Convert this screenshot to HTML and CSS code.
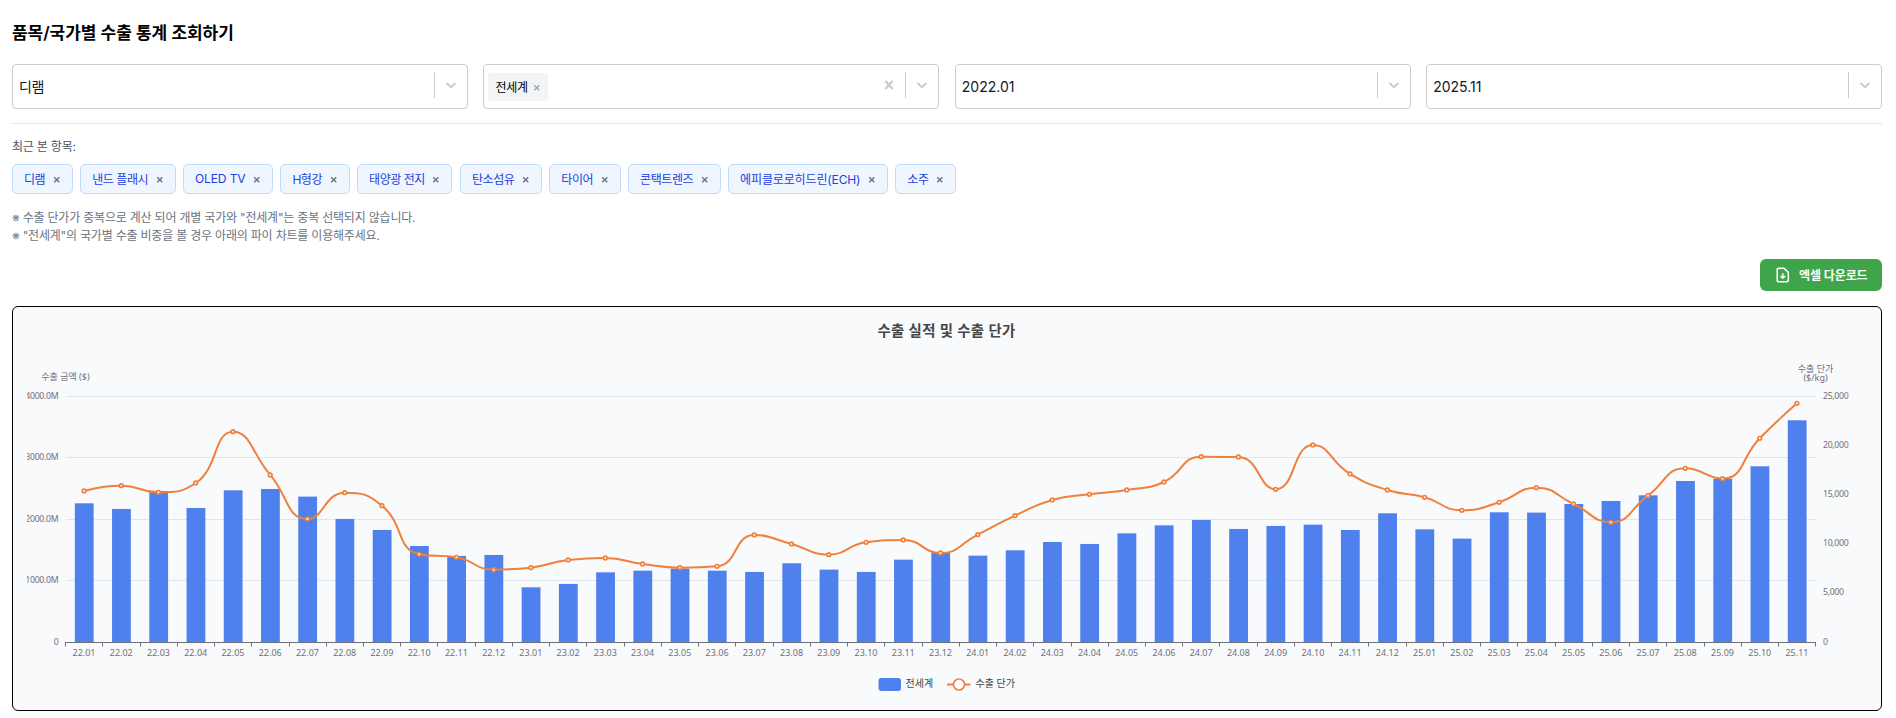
FILE: index.html
```html
<!DOCTYPE html>
<html lang="ko">

<head>
  <meta charset="UTF-8" />
  <meta name="viewport" content="width=device-width, initial-scale=1.0" />
  <title>품목/국가별 수출 통계</title>
  <link rel="stylesheet" href="styles.css">
</head>

<body>
  <h1 class="page-title">품목/국가별 수출 통계 조회하기</h1>

  <div class="filters">
    <div class="select">
      <span class="select-value kr">디램</span>
      <span class="select-separator"></span>
      <svg class="select-icon" viewBox="0 0 20 20"><use href="#chevron" /></svg>
    </div>
    <div class="select">
      <span class="select-chip">전세계<svg class="x-icon chip-x" viewBox="0 0 8 8"><use href="#cross" /></svg></span>
      <svg class="select-icon clear" viewBox="0 0 20 20"><path d="M6.4 6L13.6 14M13.6 6L6.4 14" /></svg>
      <span class="select-separator"></span>
      <svg class="select-icon" viewBox="0 0 20 20"><use href="#chevron" /></svg>
    </div>
    <div class="select">
      <span class="select-value">2022.01</span>
      <span class="select-separator"></span>
      <svg class="select-icon" viewBox="0 0 20 20"><use href="#chevron" /></svg>
    </div>
    <div class="select">
      <span class="select-value">2025.11</span>
      <span class="select-separator"></span>
      <svg class="select-icon" viewBox="0 0 20 20"><use href="#chevron" /></svg>
    </div>
  </div>

  <div class="recent">
    <p class="recent-label">최근 본 항목:</p>
    <div class="tags" id="tags"></div>
  </div>

  <div class="notes">
    <p>※ 수출 단가가 중복으로 계산 되어 개별 국가와 "전세계"는 중복 선택되지 않습니다.</p>
    <p>※ "전세계"의 국가별 수출 비중을 볼 경우 아래의 파이 차트를 이용해주세요.</p>
  </div>

  <div class="actions">
    <button class="download-btn">
      <svg class="download-icon" viewBox="0 0 16 16">
        <path d="M3.7 1.2H9l4.3 4.2v7.9a1.5 1.5 0 0 1-1.5 1.5H3.7a1.5 1.5 0 0 1-1.5-1.5V2.7a1.5 1.5 0 0 1 1.5-1.5zM7.8 6.2v5M5.4 9l2.4 2.3L10.2 9" />
      </svg>
      <span>엑셀 다운로드</span>
    </button>
  </div>

  <div class="chart-card">
    <svg class="chart" id="chart" viewBox="27 307 1840 403"></svg>
  </div>

  <svg class="defs">
    <symbol id="chevron" viewBox="0 0 20 20"><path d="M5.6 8L10 12.2 14.4 8" /></symbol>
    <symbol id="cross" viewBox="0 0 8 8"><path d="M1.3 1.3L6.7 6.7M6.7 1.3L1.3 6.7" /></symbol>
  </svg>

  <script src="script.js"></script>
</body>

</html>
```
FILE: styles.css
```css
:root {
  --text-color: #111827;
  --muted: #6b7280;
  --select-border: #cccccc;
  --tag-bg: #eff6ff;
  --tag-border: #bfdbfe;
  --tag-text: #1d40e0;
  --green: #40a44a;
  --bar: #4f81ee;
  --line: #f0803c;
}

* {
  box-sizing: border-box;
}

body {
  margin: 0;
  padding: 19px 14px 0 12px;
  background: #fff;
  color: var(--text-color);
  font-family: Inter, "Noto Sans CJK KR", sans-serif;
  font-size: 14px;
}

p {
  margin: 0;
}

.page-title {
  margin: 0;
  height: 28px;
  line-height: 28px;
  font-size: 17px;
  font-weight: 600;
  letter-spacing: -0.05px;
  color: #000;
}

.filters {
  display: grid;
  grid-template-columns: repeat(4, 1fr);
  gap: 15.6px;
  margin-top: 17px;
}

.select {
  display: flex;
  align-items: center;
  height: 45px;
  padding: 0 6px;
  border: 1px solid var(--select-border);
  border-radius: 4px;
}

.select-value {
  flex: 1;
  font-size: 14px;
  line-height: 20px;
}

.select-value.kr {
  letter-spacing: -0.3px;
}

.select-chip {
  display: flex;
  align-items: center;
  height: 28px;
  margin-left: -2px;
  margin-right: auto;
  padding: 0 7.5px 0 7px;
  border-radius: 3px;
  background: #f3f4f6;
  font-size: 12px;
  letter-spacing: -0.2px;
  color: #000;
}

.select-separator {
  width: 1px;
  height: 26px;
  margin: 0 6px 4px 6px;
  background: var(--select-border);
}

.select-icon {
  width: 20px;
  height: 20px;
  margin-bottom: 3px;
  fill: none;
  stroke: #ccc;
  stroke-width: 2;
}

.clear {
  stroke-width: 2.4;
}

.x-icon {
  width: 7.5px;
  height: 7.5px;
  fill: none;
  stroke: #6b7280;
  stroke-width: 1.5;
}

.chip-x {
  margin: 2px 0 0 5px;
  stroke: #9ca3af;
}

.recent {
  margin-top: 14px;
  padding-top: 14px;
  border-top: 1px solid #e5e7eb;
}

.recent-label {
  height: 18px;
  line-height: 18px;
  font-size: 12px;
  letter-spacing: -0.2px;
  color: #4b5563;
}

.tags {
  display: flex;
  gap: 7.5px;
  margin-top: 8px;
}

.tag {
  display: flex;
  align-items: center;
  justify-content: space-between;
  height: 30px;
  padding: 0 10.5px 2px 11px;
  border: 1px solid var(--tag-border);
  border-radius: 5px;
  background: var(--tag-bg);
  color: var(--tag-text);
  font-size: 12px;
  letter-spacing: -0.45px;
  white-space: nowrap;
}

.tag.latin {
  letter-spacing: -0.13px;
}

.tag .x-icon {
  margin: 3px 1px 0 7.5px;
}

.notes {
  margin-top: 15px;
  font-size: 12px;
  line-height: 18px;
  letter-spacing: -0.2px;
  color: var(--muted);
}

.actions {
  display: flex;
  justify-content: flex-end;
  margin-top: 14px;
}

.download-btn {
  display: flex;
  align-items: center;
  gap: 8px;
  width: 122px;
  height: 32px;
  padding: 0 13px 1px 15px;
  border: none;
  border-radius: 6px;
  background: var(--green);
  color: #fff;
  font-family: inherit;
  font-size: 12px;
  font-weight: 600;
  letter-spacing: -0.1px;
  white-space: nowrap;
}

.download-icon {
  flex: none;
  width: 16px;
  height: 16px;
  fill: none;
  stroke: #fff;
  stroke-width: 1.5;
  stroke-linejoin: round;
}

.chart-card {
  height: 405px;
  margin-top: 15px;
  padding: 0 14px;
  border: 1px solid #000;
  border-radius: 6px;
  background: #f9fafc;
}

.chart {
  display: block;
  width: 1840px;
  height: 403px;
  overflow: hidden;
  font-family: "Noto Sans", "Noto Sans CJK KR", sans-serif;
}

.chart-title {
  font-size: 14.4px;
  font-weight: 700;
  letter-spacing: 0.3px;
  text-anchor: middle;
  fill: #464646;
}

.label {
  font-size: 9px;
  fill: #6e7079;
}

.label.value {
  font-size: 8.7px;
  letter-spacing: -0.3px;
}

.label.middle {
  text-anchor: middle;
}

.label.end {
  text-anchor: end;
}

.legend-text {
  font-size: 10px;
  fill: #444;
}

.grid-line {
  stroke: #e0e6f1;
}

.axis {
  stroke: #6e7079;
}

.bar {
  fill: var(--bar);
}

.price-line {
  fill: none;
  stroke: var(--line);
  stroke-width: 2;
}

.dot {
  fill: #fff;
  stroke: var(--line);
  stroke-width: 1.7;
}

.defs {
  display: none;
}
```
FILE: script.js
```javascript
const recentItems = ["디램", "낸드 플래시", "OLED TV", "H형강", "태양광 전지", "탄소섬유", "타이어", "콘택트렌즈", "에피클로로히드린(ECH)", "소주"];

document.getElementById("tags").innerHTML = recentItems.map(name =>
  `<span class="tag${/[A-Z]{2}/.test(name) ? " latin" : ""}"><span>${name}</span><svg class="x-icon" viewBox="0 0 8 8"><use href="#cross" /></svg></span>`
).join("");

// Export amount, million $
const amounts = [
  2260, 2168, 2461, 2184, 2472, 2493, 2369, 2006, 1827, 1566, 1404, 1420,
  894, 949, 1138, 1165, 1198, 1165, 1144, 1285, 1182, 1144, 1344, 1458,
  1409, 1496, 1631, 1599, 1772, 1902, 1989, 1843, 1892, 1913, 1827, 2098,
  1837, 1686, 2114, 2109, 2249, 2298, 2390, 2623, 2661, 2862, 3610
];

// Unit price, $/kg
const prices = [
  15379, 15921, 15244, 16192, 21409, 17005, 12534, 15210, 13889, 8943, 8638, 7385,
  7588, 8367, 8570, 7961, 7588, 7724, 10908, 9993, 8909, 10163, 10400, 9079,
  10942, 12873, 14465, 15041, 15481, 16294, 18868, 18834, 15549, 20054, 17107, 15481,
  14736, 13415, 14228, 15718, 14058, 12195, 14905, 17683, 16633, 20732, 24288
];

const left = 65.6, right = 1815.8, top_ = 396.3, bottom = 642.3;
const band = (right - left) / amounts.length;
const yOf = (value, max) => bottom - value / max * (bottom - top_);
const clamp = (v, a, b) => Math.max(Math.min(v, Math.max(a, b)), Math.min(a, b));

function smoothPath(pts) {
  let d = `M${pts[0].x} ${pts[0].y}`;
  let c0 = pts[0];
  for (let i = 1; i < pts.length; i++) {
    const prev = pts[i - 1], p = pts[i], next = pts[i + 1];
    let c1 = p, nextC0 = p;
    if (next) {
      const lenPrev = Math.hypot(p.x - prev.x, p.y - prev.y);
      const lenNext = Math.hypot(next.x - p.x, next.y - p.y);
      const ratio = lenNext / (lenNext + lenPrev);
      // keep the control points between neighbours so the curve never overshoots
      const nx = clamp(p.x + (next.x - prev.x) * 0.5 * ratio, next.x, p.x);
      const ny = clamp(p.y + (next.y - prev.y) * 0.5 * ratio, next.y, p.y);
      c1 = {
        x: clamp(p.x - (nx - p.x) * lenPrev / lenNext, prev.x, p.x),
        y: clamp(p.y - (ny - p.y) * lenPrev / lenNext, prev.y, p.y)
      };
      nextC0 = {
        x: p.x + (p.x - c1.x) * lenNext / lenPrev,
        y: p.y + (p.y - c1.y) * lenNext / lenPrev
      };
    }
    d += `C${c0.x} ${c0.y} ${c1.x} ${c1.y} ${p.x} ${p.y}`;
    c0 = nextC0;
  }
  return d;
}

let svg = `<text class="chart-title" x="946.5" y="336">수출 실적 및 수출 단가</text>
  <text class="label middle" x="65.5" y="380">수출 금액 ($)</text>
  <text class="label middle" x="1815.5" y="371.5">수출 단가</text>
  <text class="label middle" x="1815.5" y="380.5">($/kg)</text>`;

[0, 1000, 2000, 3000, 4000].forEach(v => {
  const y = yOf(v, 4000);
  if (v) svg += `<line class="grid-line" x1="${left}" x2="${right}" y1="${Math.floor(y) + 0.5}" y2="${Math.floor(y) + 0.5}" />`;
  svg += `<text class="label value end" x="58.3" y="${y + 2.5}">${v ? v + ".0M" : 0}</text>`;
});

[0, 5000, 10000, 15000, 20000, 25000].forEach(v => {
  svg += `<text class="label value" x="1823" y="${yOf(v, 25000) + 2.2}">${v.toLocaleString("en-US")}</text>`;
});

amounts.forEach((v, i) => {
  const cx = left + band * (i + 0.5);
  const y = yOf(v, 4000);
  const month = `${22 + Math.floor(i / 12)}.${String(i % 12 + 1).padStart(2, "0")}`;
  svg += `<rect class="bar" x="${cx - 9.4}" y="${y}" width="18.8" height="${bottom - y}" />`;
  svg += `<text class="label middle" x="${cx - 0.2}" y="656">${month}</text>`;
});

svg += `<line class="axis" x1="${left}" x2="${right}" y1="642.5" y2="642.5" />`;
for (let i = 0; i <= amounts.length; i++) {
  const x = Math.floor(left + band * i) + 0.5;
  svg += `<line class="axis" x1="${x}" x2="${x}" y1="642" y2="646.5" />`;
}

const points = prices.map((v, i) => ({ x: left + band * (i + 0.5) - 0.2, y: yOf(v, 25000) }));
svg += `<path class="price-line" d="${smoothPath(points)}" />`;
points.forEach(p => {
  svg += `<circle class="dot" cx="${p.x}" cy="${p.y}" r="1.8" />`;
});

// legend
svg += `<rect class="bar" x="878.5" y="678" width="22.5" height="13" rx="3" />
  <text class="legend-text" x="905.5" y="687">전세계</text>
  <path class="price-line" d="M947 684.5H970.5" />
  <circle class="dot" cx="959" cy="684.5" r="5.5" />
  <text class="legend-text" x="975.5" y="687">수출 단가</text>`;

document.getElementById("chart").innerHTML = svg;
```
